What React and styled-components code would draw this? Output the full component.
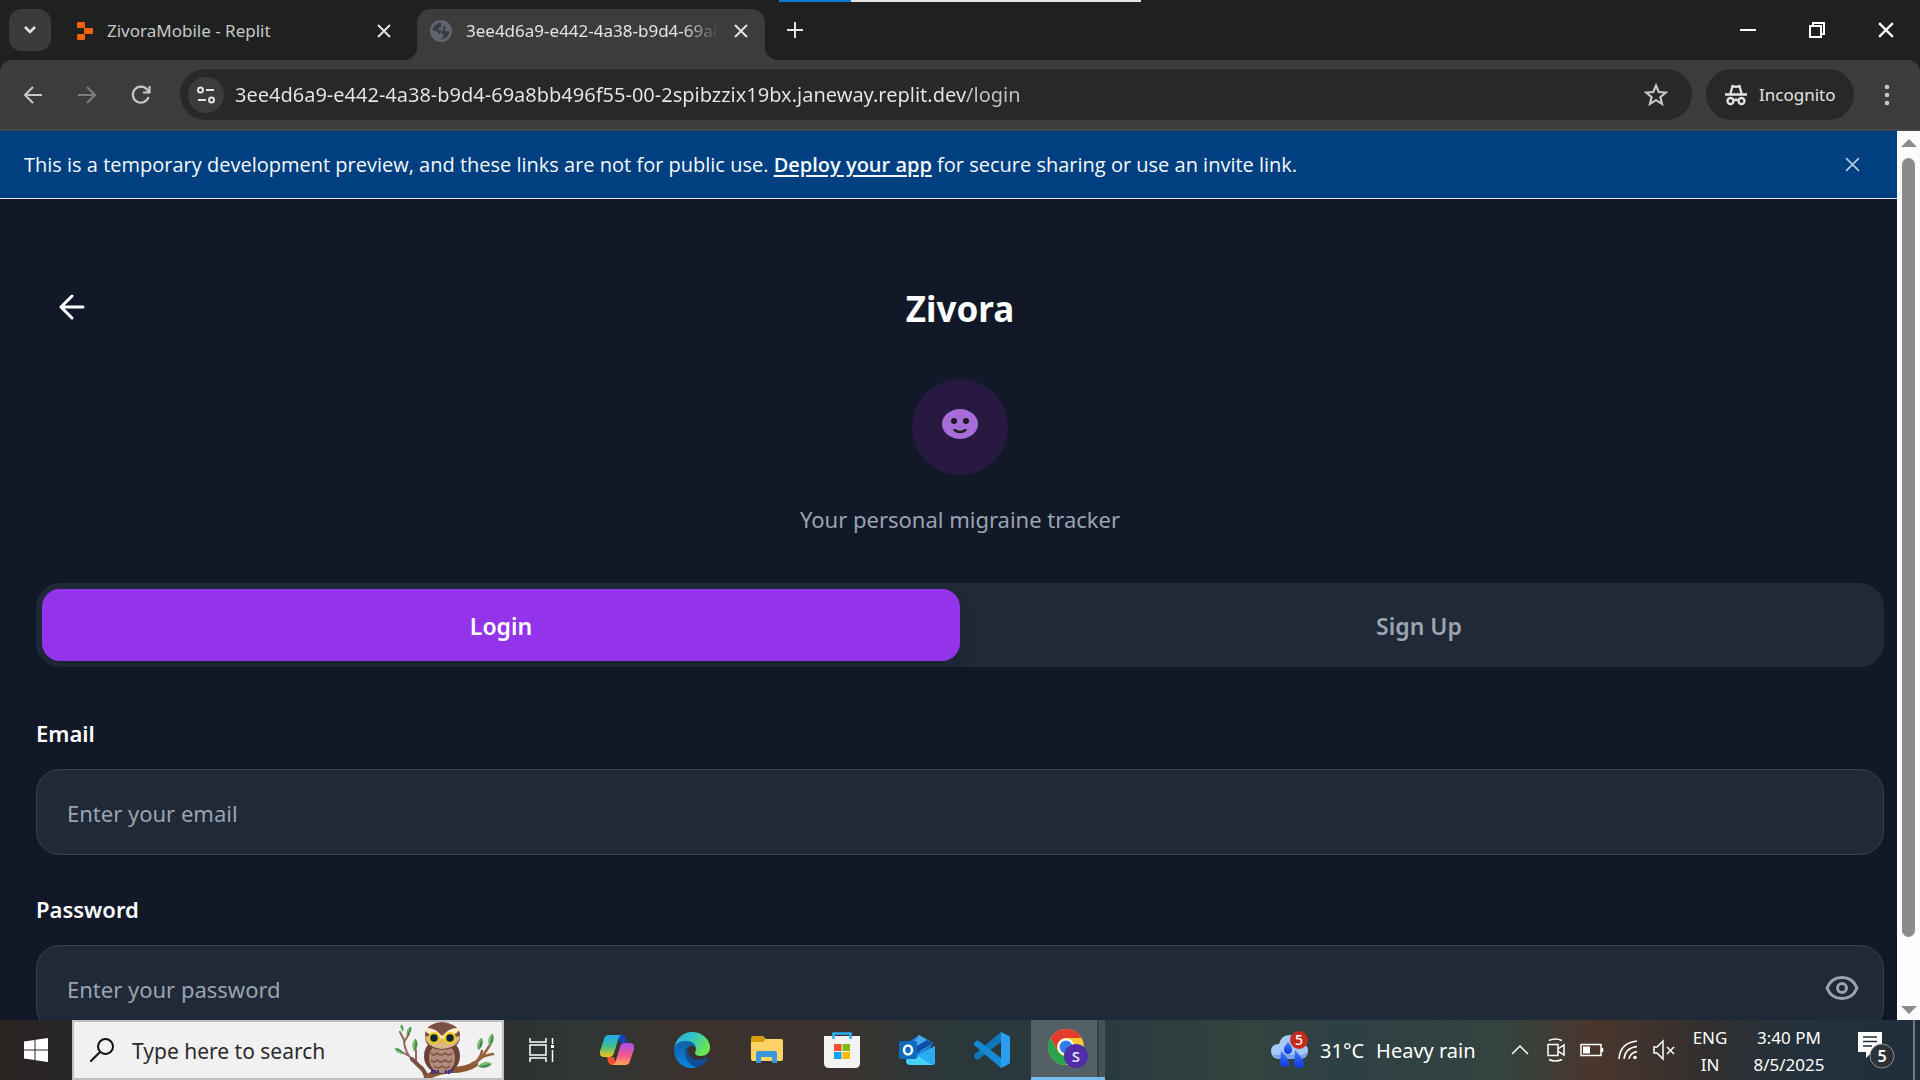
import React, { useState } from "react";
import styled, { createGlobalStyle, css } from "styled-components";

const sans = `"Noto Sans", "Open Sans", "Liberation Sans", sans-serif`;

const c = {
  strip: "#1f2120",
  toolbar: "#3c3c3c",
  field: "#282828",
  page: "#111827",
  panel: "#1f2937",
  line: "#374151",
  muted: "#9ca3af",
  purple: "#9333ea",
};

const GlobalStyle = createGlobalStyle`
  *, *::before, *::after { box-sizing: border-box; }
  body { margin: 0; background: ${c.strip}; font-family: ${sans}; }
  button, input { font: inherit; color: inherit; margin: 0; }
  svg { display: block; flex: none; }
`;

const Screen = styled.div`
  display: flex;
  flex-direction: column;
  height: 100vh;
  overflow: hidden;
  position: relative;
`;

const IconButton = styled.button`
  display: grid;
  place-items: center;
  flex: none;
  width: ${(p) => p.$w || 54}px;
  height: ${(p) => p.$h || 42}px;
  padding: 0;
  border: 0;
  border-radius: ${(p) => p.$radius || 0}px;
  background: ${(p) => p.$bg || "transparent"};
  color: ${(p) => p.$color || "#e3e3e3"};
`;

/* Tab strip */
const TabStrip = styled.header`
  display: flex;
  align-items: center;
  flex: none;
  height: 60px;
  padding-left: 9px;
`;

const LoadBar = styled.div`
  position: absolute;
  top: 0;
  left: 779px;
  width: 362px;
  height: 2px;
  background: linear-gradient(90deg, #0a7bd8 72px, #e4e4e4 72px);
`;

const BrowserTab = styled.div`
  display: flex;
  align-items: center;
  align-self: flex-end;
  position: relative;
  height: 51px;
  padding: ${(p) => (p.$active ? "0 10px 8px 13px" : "0 19px 8px 16px")};
  width: ${(p) => (p.$active ? 348 : 356)}px;
  margin-left: ${(p) => (p.$active ? 0 : 10)}px;
  color: ${(p) => (p.$active ? "#e3e3e3" : "#c7c7c7")};
  ${(p) =>
    p.$active &&
    css`
      background: ${c.toolbar};
      border-radius: 14px 14px 0 0;
      &::before,
      &::after {
        content: "";
        position: absolute;
        bottom: 0;
        width: 14px;
        height: 14px;
      }
      &::before {
        right: 100%;
        background: radial-gradient(circle at 0 0, transparent 14px, ${c.toolbar} 15px);
      }
      &::after {
        left: 100%;
        background: radial-gradient(circle at 100% 0, transparent 14px, ${c.toolbar} 15px);
      }
    `}
`;

const TabTitle = styled.span`
  flex: 1;
  min-width: 0;
  margin: 0 8px 0 14px;
  overflow: hidden;
  white-space: nowrap;
  font-size: 17px;
  line-height: 24px;
  mask-image: ${(p) => (p.$fade ? "linear-gradient(90deg, #000 calc(100% - 36px), transparent)" : "none")};
`;

const Spacer = styled.div`
  flex: 1;
`;

/* Toolbar */
const Toolbar = styled.div`
  display: flex;
  align-items: center;
  flex: none;
  height: 71px;
  padding: 0 6px;
  background: ${c.toolbar};
  border-bottom: 2px solid #474747;
  border-radius: 12px 12px 0 0;
`;

const Omnibox = styled.form`
  display: flex;
  align-items: center;
  flex: 1;
  height: 51px;
  margin: 0 14px 0 12px;
  padding: 0 9px 0 8px;
  border-radius: 26px;
  background: ${c.field};
`;

const Address = styled.input`
  flex: 1;
  min-width: 0;
  height: 36px;
  margin-left: 11px;
  padding: 0;
  border: 0;
  outline: 0;
  font-size: 20px;
  color: transparent;
  background: linear-gradient(90deg, #e8e8e8 732px, #c4c4c4 732px) text;
`;

const Incognito = styled.button`
  display: flex;
  align-items: center;
  gap: 12px;
  height: 51px;
  width: 148px;
  margin-right: 6px;
  padding: 0 0 0 19px;
  border: 0;
  border-radius: 26px;
  background: ${c.field};
  color: #e3e3e3;
  font-size: 17px;
`;

/* Notice */
const Notice = styled.div`
  display: flex;
  align-items: center;
  justify-content: space-between;
  flex: none;
  height: 68px;
  padding: 0 18px 0 24px;
  background: #004080;
  border-bottom: 1px solid #e4e8ee;
  color: #f5f9fc;
  font-family: "Open Sans", "Noto Sans", sans-serif;
  font-size: 20px;
  line-height: 28px;
`;

const NoticeText = styled.p`
  margin: 0;
`;

const NoticeLink = styled.a`
  color: inherit;
  font-weight: 600;
  text-decoration: underline;
  text-decoration-thickness: 2px;
  text-underline-offset: 3px;
`;

/* Web page */
const Viewport = styled.div`
  display: flex;
  flex: 1;
  min-height: 0;
`;

const PageColumn = styled.div`
  display: flex;
  flex-direction: column;
  flex: 1;
  min-width: 0;
  overflow: hidden;
  background: ${c.page};
`;

const Scrollbar = styled.div`
  display: flex;
  flex-direction: column;
  align-items: center;
  width: 23px;
  padding: 8px 0 6px;
  background: #fcfcfc;
`;

const Thumb = styled.div`
  width: 13px;
  flex: 0 0 89%;
  margin: 11px 0 auto;
  border-radius: 7px;
  background: #8b8b8b;
`;

const Page = styled.main`
  display: flex;
  flex-direction: column;
  padding: 72px 13px 48px 36px;
  color: #fff;
`;

const PageHeader = styled.div`
  display: grid;
  grid-template-columns: 72px 1fr 72px;
  align-items: center;
  height: 72px;
`;

const Brand = styled.h1`
  margin: 0;
  padding-top: 4px;
  text-align: center;
  font-size: 35px;
  line-height: 48px;
  font-weight: 700;
`;

const Logo = styled.div`
  display: grid;
  place-items: center;
  align-self: center;
  width: 96px;
  height: 96px;
  margin-top: 36px;
  padding-bottom: 6px;
  border-radius: 50%;
  background: #281942;
`;

const Tagline = styled.p`
  margin: 24px 0 44px;
  text-align: center;
  font-size: 22px;
  line-height: 40px;
  color: ${c.muted};
`;

const Segments = styled.div`
  display: flex;
  padding: 6px;
  border-radius: 24px;
  background: ${c.panel};
`;

const Segment = styled.button`
  flex: 1;
  height: 72px;
  padding: 2px 0 0;
  border: 0;
  border-radius: 18px;
  font-size: 23px;
  font-weight: 600;
  color: ${(p) => (p.$on ? "#fff" : c.muted)};
  background: ${(p) => (p.$on ? c.purple : "transparent")};
  box-shadow: ${(p) => (p.$on ? "0 10px 16px rgba(0, 0, 0, 0.12)" : "none")};
`;

const LoginForm = styled.form`
  display: flex;
  flex-direction: column;
  gap: 36px;
  margin-top: 48px;
`;

const Field = styled.div`
  display: flex;
  flex-direction: column;
  gap: 18px;
`;

const Label = styled.label`
  font-size: 22px;
  line-height: 36px;
  font-weight: 600;
`;

const FieldBox = styled.div`
  display: flex;
  align-items: center;
  height: 86px;
  padding: 0 14px 0 30px;
  border: 1px solid ${c.line};
  border-radius: 24px;
  background: ${c.panel};
`;

const TextInput = styled.input`
  flex: 1;
  min-width: 0;
  height: 60px;
  padding: 2px 0 0;
  border: 0;
  outline: 0;
  background: transparent;
  font-size: 22px;
  &::placeholder {
    color: ${c.muted};
    opacity: 1;
  }
`;

/* Taskbar */
const Taskbar = styled.footer`
  display: flex;
  align-items: stretch;
  flex: none;
  height: 60px;
  color: #fff;
  background: linear-gradient(
    90deg,
    #2a2321 0%,
    #262627 4%,
    #2c2f30 26%,
    #2f3635 30%,
    #3b322d 36%,
    #3a332f 44%,
    #2b3739 49%,
    #283a3f 57%,
    #33433f 65%,
    #2d4044 70%,
    #34433f 78%,
    #4a362d 83%,
    #312f2e 89%,
    #22313d 94%,
    #1f2e3a 100%
  );
`;

const SearchBox = styled.label`
  display: flex;
  align-items: center;
  width: 432px;
  padding: 0 4px 0 16px;
  border: 2px solid #bfbfbf;
  background: #f1f1f1;
  color: #111;
`;

const SearchInput = styled.input`
  flex: 1;
  min-width: 0;
  height: 40px;
  margin-left: 18px;
  padding: 2px 0 0;
  border: 0;
  outline: 0;
  background: transparent;
  font-size: 21px;
  &::placeholder {
    color: #2b2b2b;
    opacity: 1;
  }
`;

const AppButton = styled.button`
  display: grid;
  place-items: center;
  width: 75px;
  padding: 0;
  border: 0;
  background: transparent;
`;

const RunningApp = styled(AppButton)`
  width: 74px;
  margin-left: 2px;
  border-bottom: 3px solid #76b9ed;
  background: linear-gradient(90deg, #536065 66px, #363f42 66px, #363f42 68px, #46525a 68px);
`;

const Weather = styled.button`
  display: flex;
  align-items: center;
  gap: 12px;
  width: 231px;
  padding: 0;
  border: 0;
  background: transparent;
  font-size: 20px;
  white-space: nowrap;
`;

const Tray = styled.div`
  display: flex;
  align-items: center;
`;

const TrayText = styled.button`
  width: ${(p) => p.$w}px;
  padding: 2px 0 0;
  border: 0;
  background: transparent;
  font-size: 17px;
  line-height: 27px;
  text-align: center;
  white-space: nowrap;
`;

const ShowDesktop = styled.button`
  width: 7px;
  margin-left: 1px;
  padding: 0;
  border: 0;
  border-left: 2px solid #6f7a82;
  background: transparent;
`;

/* Line icon on a square grid */
const Line = ({ d, size = 24, box = 24, w = 2, children, ...rest }) => (
  <svg width={size} height={size} viewBox={`0 0 ${box} ${box}`} fill="none" stroke="currentColor" strokeWidth={w} {...rest}>
    {d && <path d={d} />}
    {children}
  </svg>
);

const CloseIcon = ({ size = 14, w = 2 }) => <Line size={size} box={14} w={w} d="M1 1l12 12M13 1L1 13" />;

const ReplitIcon = () => (
  <svg width="16" height="20" viewBox="0 0 16 20" fill="#f26207">
    <rect x="0" y="1" width="8" height="6" rx="1" />
    <rect x="7" y="7" width="9" height="6" rx="1" />
    <rect x="0" y="13" width="8" height="6" rx="1" />
  </svg>
);

const GlobeIcon = () => (
  <svg width="22" height="22" viewBox="0 0 22 22">
    <circle cx="11" cy="11" r="11" fill="#5f666e" />
    <path
      d="M11 2.5c-5 .2-8.300 3.700-8.500 8 2 .6 4.200.5 5.200 1.500.8 1 .3 2.200 1.300 2.600 1.300.4.900-1.600 2.300-2 1.300-.5.800-2.100-.8-2.300-1.500-.2-2.600-.6-1.700-1.900.7-.9 2.400-.6 2.600-2.100.2-1.300-1.300-1.700-.4-3.800zM14 4c.2 1.800 1.300 2 1.600 3.400.3 1.300-1.200 1.500-.9 2.900.4 1.500 3 .4 4.700 1.200-.3 4.300-4 8-8.400 8-.4-1.700 2.600-1.300 2.500-3.300-.1-1.500-1.900-1.300-1.400-2.900"
      fill="#3a3d42"
    />
  </svg>
);

const IncognitoIcon = () => (
  <svg width="22" height="22" viewBox="0 0 22 22" fill="none" stroke="currentColor" strokeWidth="2.300">
    <path d="M5.500 9.500l2-7.500q3.500 1.500 7 0l2 7.500M0 10.500h22" />
    <circle cx="5.500" cy="17" r="3" />
    <circle cx="16.500" cy="17" r="3" />
    <path d="M8.500 16.500q2.500-1.500 5 0" />
  </svg>
);

const FaceIcon = () => (
  <svg width="36" height="30" viewBox="0 0 36 30">
    <ellipse cx="18" cy="15" rx="18" ry="15" fill="#a66dd9" />
    <circle cx="12" cy="12" r="3" fill="#1e1b22" />
    <circle cx="24" cy="12" r="3" fill="#1e1b22" />
    <path d="M12.500 21q5.500 4 11 0" fill="none" stroke="#1e1b22" strokeWidth="2.500" strokeLinecap="round" />
  </svg>
);

const EyeIcon = () => (
  <svg width="34" height="26" viewBox="0 0 34 26" fill="none" stroke={c.muted} strokeWidth="3">
    <path d="M2 13C5 5.500 10.500 2.500 17 2.500S29 5.500 32 13c-3 7.500-8.500 10.500-15 10.500S5 20.500 2 13z" strokeLinejoin="round" />
    <circle cx="17" cy="13" r="4.500" />
  </svg>
);

const Leaf = ({ x, y, r, s = 1 }) => (
  <g transform={`translate(${x} ${y}) rotate(${r}) scale(${s})`}>
    <path d="M0 7C-4 2-3-4 0-7c3 3 4 9 0 14z" fill="#3c8c45" />
    <path d="M0 7C-4 2-3-4 0-7z" fill="#82bf70" />
  </g>
);

const OwlIcon = () => (
  <svg width="104" height="56" viewBox="0 0 104 56">
    <g fill="none" strokeLinecap="round">
      <path d="M34 58q0-8-8-13L15 34Q10 26 10 18L6 10M10 20l5-8M15 34L6 29M22 40v-12" stroke="#93695f" strokeWidth="2" />
      <path d="M32 56q-1-8-7-12l-7-7" stroke="#7c5040" strokeWidth="4" />
      <path d="M35 54q10-5 22-6 16 0 24-6" stroke="#8a5836" strokeWidth="6" />
      <path d="M78 43q8-5 10-14M82 41q6-8 17-9M88 35l8-12" stroke="#94633e" strokeWidth="2.500" />
    </g>
    <Leaf x={8} y={6} r={-15} s={0.5} />
    <Leaf x={15} y={9} r={25} s={0.7} />
    <Leaf x={21} y={23} r={5} s={0.9} />
    <Leaf x={5} y={29} r={-60} s={0.7} />
    <Leaf x={86} y={22} r={15} s={0.9} />
    <Leaf x={97} y={18} r={12} s={0.9} />
    <Leaf x={91} y={43} r={80} s={1} />
    <ellipse cx="48" cy="34" rx="18" ry="18" fill="#6b4036" />
    <ellipse cx="48" cy="36" rx="13" ry="15" fill="#b08b7b" />
    <path d="M37 31q3 4 6 0 4 4 8 0 4 4 7 0M37 38q3 4 6 0 4 4 8 0 4 4 7 0M40 44q4 4 8 0 4 4 8 0" fill="none" stroke="#7c5144" strokeWidth="1.500" />
    <path d="M31 16Q30 7 37 3q11-6 22 0 8 4 7 13-1 11-18 12-16-1-17-12z" fill="#7a5146" />
    <path d="M31 14q1 11 17 13 17-2 18-13-7 2-18-1-10 3-17 1z" fill="#d9b987" />
    <path d="M30 6q13-1 18 9 6-10 18-9-2 6-9 7l-9 5-9-5q-7-1-9-7z" fill="#ffedc4" />
    <circle cx="40" cy="16" r="6" fill="#f0cc1d" />
    <circle cx="56" cy="16" r="6" fill="#f0cc1d" />
    <circle cx="40" cy="16" r="3.800" fill="#10243a" />
    <circle cx="56" cy="16" r="3.800" fill="#10243a" />
    <path d="M46 18l2-3 2 3-2 7z" fill="#eeb83b" />
    <path d="M38 48v4m3-4v4m3-4v3M52 48v4m3-4v4m3-5v4" stroke="#38318f" strokeWidth="2" />
  </svg>
);

const TaskViewIcon = () => (
  <svg width="26" height="24" viewBox="0 0 26 24" fill="none" stroke="#fff" strokeWidth="1.500">
    <path d="M1 0v4h16V0M1 24v-4h16v4M1 7h16v10H1zM23.500 0v6M23.500 12v12" />
    <path d="M22 7h3v3h-3z" fill="#fff" stroke="none" />
  </svg>
);

const CopilotIcon = () => (
  <svg width="34" height="32" viewBox="0 0 34 32">
    <defs>
      <linearGradient id="cpA" x1="0" y1="0" x2="0" y2="1">
        <stop offset="0" stopColor="#22a7f2" />
        <stop offset=".5" stopColor="#3bbf8f" />
        <stop offset="1" stopColor="#f5c211" />
      </linearGradient>
      <linearGradient id="cpB" x1="0" y1="0" x2="0" y2="1">
        <stop offset="0" stopColor="#a54fe8" />
        <stop offset=".55" stopColor="#f2588f" />
        <stop offset="1" stopColor="#ffa552" />
      </linearGradient>
    </defs>
    <path d="M18 1h4q3 0 4 4l1 4h-7z" fill="#1b3fbd" />
    <path d="M16 31h-4q-3 0-4-4l-1-4h7z" fill="#f4512f" />
    <path d="M9 1h12q-2 1-3 5l-4 13q-1 4-5 4H4q-5 0-4-6L4 5q1-4 5-4z" fill="url(#cpA)" />
    <path d="M25 31H13q2-1 3-5l4-13q1-4 5-4h5q5 0 4 6l-4 12q-1 4-5 4z" fill="url(#cpB)" />
  </svg>
);

const EdgeIcon = () => (
  <svg width="36" height="36" viewBox="0 0 36 36">
    <defs>
      <linearGradient id="edA" x1="0" y1="0" x2="1" y2=".5">
        <stop offset="0" stopColor="#2aa7e4" />
        <stop offset=".5" stopColor="#35c3c5" />
        <stop offset="1" stopColor="#6be64f" />
      </linearGradient>
      <linearGradient id="edB" x1="0" y1="0" x2="0" y2="1">
        <stop offset="0" stopColor="#0d5fa8" />
        <stop offset="1" stopColor="#0a86e0" />
      </linearGradient>
    </defs>
    <path d="M0 17C1 7 9 0 18 0c11 0 18 8 18 15 0 6-4 9-9 9-4 0-6-1-6-3 0-1 1-2 1-4 0-4-4-7-9-7-7 0-12 3-13 7z" fill="url(#edA)" />
    <path d="M0 18C0 12 6 9 12 9c6 0 10 3 10 8-1-3-4-4-6-3-5 2-6 8-3 13 2 5 7 8 10 8-2 1-4 1-6 1C8 36 0 28 0 18z" fill="url(#edB)" />
    <path d="M12 20c-1 8 5 15 12 15 4-1 8-5 10-8 0-1-1-1-2-1-9 4-19 1-18-9-1 1-2 2-2 3z" fill="#0f4d98" />
  </svg>
);

const ExplorerIcon = () => (
  <svg width="32" height="28" viewBox="0 0 32 28">
    <path d="M0 2q0-2 2-2h10l3 3H30q2 0 2 2v8H0z" fill="#d99b0f" />
    <path d="M0 6h12l3-3h15q2 0 2 2v18q0 2-2 2H2q-2 0-2-2z" fill="#fdd365" />
    <path d="M5 27V17q0-2 2-2h17q2 0 2 2v10h-5v-6H10v6z" fill="#3b97dd" />
  </svg>
);

const StoreIcon = () => (
  <svg width="36" height="36" viewBox="0 0 36 36">
    <path d="M0 4h36v27q0 5-5 5H5q-5 0-5-5z" fill="#f3f3f3" />
    <path d="M9.500 7V1.500h17V7" fill="none" stroke="#2cb1ee" strokeWidth="2.500" />
    <path d="M10 12h7.500v7H10z" fill="#f1502f" />
    <path d="M18.500 12H26v7h-7.500z" fill="#80bb07" />
    <path d="M10 20h7.500v7H10z" fill="#0fa5ee" />
    <path d="M18.500 20H26v7h-7.500z" fill="#fdb90a" />
  </svg>
);

const OutlookIcon = () => (
  <svg width="36" height="30" viewBox="0 0 36 30">
    <path d="M7 9L20 0l14 8-8 14H7z" fill="#1479cf" />
    <path d="M20 0l14 8-12 9-8-9z" fill="#46a7ea" />
    <path d="M34 8L18 18v-7l10-6z" fill="#0d4da5" />
    <path d="M8 20l10 2 18-11v16q0 3-3 3H11q-3 0-4-3z" fill="#45d4f8" />
    <path d="M36 11v16q0 3-3 3L18 20z" fill="#2caaf0" />
    <rect y="6" width="18" height="18" rx="2" fill="#0f6cbd" />
    <ellipse cx="9" cy="15" rx="4" ry="4.500" fill="none" stroke="#fff" strokeWidth="2.500" />
  </svg>
);

const CodeIcon = () => (
  <svg width="36" height="36" viewBox="0 0 36 36">
    <path d="M27 0v10L5 27q-2 1-3 0l-2-2q-1-1 0-2z" fill="#0f77bd" />
    <path d="M27 36V26L5 9Q3 8 2 9l-2 2q-1 1 0 2z" fill="#1489d2" />
    <path d="M27 0l8 4q1 1 1 2v24q0 1-1 2l-8 4z" fill="#2a9df1" />
  </svg>
);

const ChromeIcon = () => (
  <svg width="40" height="40" viewBox="0 0 40 40">
    <circle cx="18" cy="18" r="18" fill="#fcc934" />
    <path d="M2.400 9A18 18 0 0 1 33.600 9H18a9 9 0 0 0-7.800 13.500z" fill="#e33b2e" />
    <path d="M2.400 9A18 18 0 0 0 18 36l7.800-13.500a9 9 0 0 1-15.600 0z" fill="#2ba24c" />
    <circle cx="18" cy="18" r="8.500" fill="#fff" />
    <circle cx="18" cy="18" r="6.500" fill="#2f7de9" />
    <circle cx="28" cy="27" r="12" fill="#4f2ca8" />
    <text x="28" y="33" textAnchor="middle" fontSize="15" fill="#e3d9fb" fontWeight="600">S</text>
  </svg>
);

const RainIcon = () => (
  <svg width="37" height="38" viewBox="0 0 37 38">
    <defs>
      <linearGradient id="drop" x1="0" y1="0" x2="0" y2="1">
        <stop offset="0" stopColor="#3a7bf0" />
        <stop offset="1" stopColor="#1237e6" />
      </linearGradient>
    </defs>
    <path d="M8 28q-8-1-8-8t8-7q2-9 11-9t11 8q7 1 7 8t-8 8z" fill="#a5c8f8" />
    <path d="M2 24q3 4 8 4h18q8 0 8-7-4 4-12 3T2 24z" fill="#7aa5ee" />
    <path d="M17 11q5 6 4 9t-4 3-4-3 4-9z" fill="url(#drop)" />
    <path d="M10 20q8 8 8 12t-4 4-5-4z" fill="url(#drop)" />
    <path d="M24 19q9 10 9 14t-5 4-5-4z" fill="url(#drop)" />
    <circle cx="28" cy="9" r="9" fill="#c42b1c" />
    <text x="28" y="14" textAnchor="middle" fontSize="14" fill="#fff" fontWeight="500">5</text>
  </svg>
);

const NotificationIcon = () => (
  <svg width="37" height="38" viewBox="0 0 37 38">
    <path d="M0 1h24v20H14l-6 6v-6H0z" fill="#fff" />
    <path d="M5 6h14M5 10.500h14M5 15h9" stroke="#222c35" strokeWidth="1.500" />
    <circle cx="24" cy="25" r="12" fill="#2f3337" stroke="#8d9296" />
    <text x="24" y="31" textAnchor="middle" fontSize="16" fill="#fff" fontWeight="600">5</text>
  </svg>
);

const pinned = [
  ["Task View", TaskViewIcon],
  ["Copilot", CopilotIcon],
  ["Microsoft Edge", EdgeIcon],
  ["File Explorer", ExplorerIcon],
  ["Microsoft Store", StoreIcon],
  ["Outlook", OutlookIcon],
  ["Visual Studio Code", CodeIcon],
];

function BrowserChrome() {
  return (
    <>
      <TabStrip>
        <IconButton $w={42} $radius={13} $bg="#3b3b3b" aria-label="Search tabs">
          <Line size={14} box={14} w={2.500} d="M2 4l5 5 5-5" />
        </IconButton>
        <BrowserTab>
          <ReplitIcon />
          <TabTitle>ZivoraMobile - Replit</TabTitle>
          <IconButton $w={28} $h={28} aria-label="Close ZivoraMobile tab">
            <CloseIcon />
          </IconButton>
        </BrowserTab>
        <BrowserTab $active>
          <GlobeIcon />
          <TabTitle $fade>3ee4d6a9-e442-4a38-b9d4-69a8</TabTitle>
          <IconButton $w={28} $h={28} aria-label="Close current tab">
            <CloseIcon />
          </IconButton>
        </BrowserTab>
        <IconButton $w={60} aria-label="New tab">
          <Line size={16} box={16} d="M8 0v16M0 8h16" />
        </IconButton>
        <Spacer />
        <IconButton $w={69} $color="#fff" aria-label="Minimize">
          <Line size={16} box={16} d="M0 8h16" />
        </IconButton>
        <IconButton $w={69} $color="#fff" aria-label="Restore">
          <Line size={16} box={16} d="M1 4h11v11H1zM4 4V1h11v11h-3" />
        </IconButton>
        <IconButton $w={69} $color="#fff" aria-label="Close window">
          <CloseIcon size={16} />
        </IconButton>
      </TabStrip>
      <LoadBar />
      <Toolbar>
        <IconButton $color="#c7c7c7" aria-label="Back">
          <Line size={18} box={18} d="M18 9H1.500M9 1L1 9l8 8" />
        </IconButton>
        <IconButton $color="#7e7e7e" aria-label="Forward">
          <Line size={18} box={18} d="M0 9h16.500M9 1l8 8-8 8" />
        </IconButton>
        <IconButton $color="#c7c7c7" aria-label="Reload">
          <Line size={20} box={20} w={2.200} d="M17.500 12A8 8 0 1 1 16 4.500L18 7M18.500 1v6.500H12" />
        </IconButton>
        <Omnibox onSubmit={(e) => e.preventDefault()}>
          <IconButton type="button" $w={36} $h={36} $radius={18} $bg="#3c3c3c" aria-label="View site information">
            <Line size={18} box={18}>
              <circle cx="3.500" cy="4" r="2.500" />
              <path d="M9 4h8M1 14h8" />
              <circle cx="14.500" cy="14" r="2.500" />
            </Line>
          </IconButton>
          <Address
            aria-label="Address bar"
            defaultValue="3ee4d6a9-e442-4a38-b9d4-69a8bb496f55-00-2spibzzix19bx.janeway.replit.dev/login"
          />
          <IconButton type="button" $color="#c7c7c7" aria-label="Bookmark this tab">
            <Line size={26} box={24} d="M12 3.200l2.500 6 6.500.5-5 4.200 1.600 6.400-5.600-3.500-5.600 3.500L8 13.900 3 9.700l6.500-.5z" />
          </IconButton>
        </Omnibox>
        <Incognito>
          <IncognitoIcon />
          Incognito
        </Incognito>
        <IconButton $color="#c7c7c7" aria-label="Browser menu">
          <svg width="6" height="28" viewBox="0 0 6 28" fill="currentColor">
            <circle cx="3" cy="6" r="2.300" />
            <circle cx="3" cy="14" r="2.300" />
            <circle cx="3" cy="22" r="2.300" />
          </svg>
        </IconButton>
      </Toolbar>
    </>
  );
}

function LoginPage() {
  const [mode, setMode] = useState("login");
  const [visible, setVisible] = useState(false);
  return (
    <Page>
      <PageHeader>
        <IconButton $w={72} $h={72} $color="#fff" aria-label="Go back">
          <Line size={26} box={26} w={3} strokeLinecap="round" strokeLinejoin="round" d="M24 13H2M13 2L2 13l11 11" />
        </IconButton>
        <Brand>Zivora</Brand>
      </PageHeader>
      <Logo>
        <FaceIcon />
      </Logo>
      <Tagline>Your personal migraine tracker</Tagline>
      <Segments>
        <Segment $on={mode === "login"} onClick={() => setMode("login")}>
          Login
        </Segment>
        <Segment $on={mode === "signup"} onClick={() => setMode("signup")}>
          Sign Up
        </Segment>
      </Segments>
      <LoginForm onSubmit={(e) => e.preventDefault()}>
        <Field>
          <Label htmlFor="email">Email</Label>
          <FieldBox>
            <TextInput id="email" type="email" placeholder="Enter your email" />
          </FieldBox>
        </Field>
        <Field>
          <Label htmlFor="password">Password</Label>
          <FieldBox>
            <TextInput id="password" type={visible ? "text" : "password"} placeholder="Enter your password" />
            <IconButton type="button" aria-label="Show password" onClick={() => setVisible(!visible)}>
              <EyeIcon />
            </IconButton>
          </FieldBox>
        </Field>
      </LoginForm>
    </Page>
  );
}

function WindowsTaskbar() {
  return (
    <Taskbar>
      <IconButton $w={72} $h={60} $color="#fff" aria-label="Start">
        <svg width="24" height="24" viewBox="0 0 24 24" fill="currentColor">
          <path d="M0 3.500l10.500-1.500v9.500H0zM11.500 1.800L24 0v11.500H11.500zM0 12.500h10.500V22L0 20.500zM11.500 12.500H24V24l-12.500-1.800z" />
        </svg>
      </IconButton>
      <SearchBox>
        <Line size={24} box={24} w={2}>
          <circle cx="15.500" cy="8.500" r="7.500" />
          <path d="M10 14L0 24" />
        </Line>
        <SearchInput aria-label="Search" placeholder="Type here to search" />
        <OwlIcon />
      </SearchBox>
      {pinned.map(([name, Icon]) => (
        <AppButton key={name} aria-label={name}>
          <Icon />
        </AppButton>
      ))}
      <RunningApp aria-label="Google Chrome">
        <ChromeIcon />
      </RunningApp>
      <Spacer />
      <Weather>
        <RainIcon />
        <span>31°C</span>
        <span>Heavy rain</span>
      </Weather>
      <Tray>
        <IconButton $w={36} $color="#fff" aria-label="Show hidden icons">
          <Line size={18} box={18} w={1.500} d="M1 13l8-8 8 8" />
        </IconButton>
        <IconButton $w={36} $color="#fff" aria-label="Camera">
          <Line size={24} box={24} w={1.500} d="M4 6.500h10v11H4zM14 11l6-4v10l-6-4M5 2.500q6-3 13 0M5 21.500q6 3 13 0" />
        </IconButton>
        <IconButton $w={36} $color="#fff" aria-label="Battery">
          <Line size={24} box={24} w={1.500}>
            <path d="M1 6.500h20v11H1zM22.500 10v4" />
            <path d="M3 8.500h7v7H3z" fill="currentColor" stroke="none" />
          </Line>
        </IconButton>
        <IconButton $w={36} $color="#fff" aria-label="Network">
          <Line size={20} box={20} w={1.500}>
            <path d="M1 19Q2 3 19 1M6 19Q7 8 19 6.500M11 19q1-6 8-7.500" />
            <circle cx="17" cy="17.500" r="1.800" fill="currentColor" stroke="none" />
          </Line>
        </IconButton>
        <IconButton $w={36} $color="#fff" aria-label="Volume muted">
          <Line size={22} box={22} w={1.500} d="M1 8h3l6-6v18l-6-6H1zM14 8l7 7M21 8l-7 7" />
        </IconButton>
        <TrayText $w={56}>
          ENG
          <br />
          IN
        </TrayText>
        <TrayText $w={102}>
          3:40 PM
          <br />
          8/5/2025
        </TrayText>
        <IconButton $w={72} $color="#fff" aria-label="Notifications">
          <NotificationIcon />
        </IconButton>
      </Tray>
      <ShowDesktop aria-label="Show desktop" />
    </Taskbar>
  );
}

export default function App() {
  return (
    <Screen>
      <GlobalStyle />
      <BrowserChrome />
      <Viewport>
        <PageColumn>
          <Notice>
            <NoticeText>
              This is a temporary development preview, and these links are not for public use.{" "}
              <NoticeLink href="#deploy">Deploy your app</NoticeLink> for secure sharing or use an invite link.
            </NoticeText>
            <IconButton $color="#b8cce0" aria-label="Dismiss notice">
              <CloseIcon size={15} w={1.500} />
            </IconButton>
          </Notice>
          <LoginPage />
        </PageColumn>
        <Scrollbar>
          <svg width="16" height="8" viewBox="0 0 16 8">
            <path d="M0 8l8-8 8 8z" fill="#8b8b8b" />
          </svg>
          <Thumb />
          <svg width="16" height="8" viewBox="0 0 16 8">
            <path d="M0 0h16l-8 8z" fill="#8b8b8b" />
          </svg>
        </Scrollbar>
      </Viewport>
      <WindowsTaskbar />
    </Screen>
  );
}
